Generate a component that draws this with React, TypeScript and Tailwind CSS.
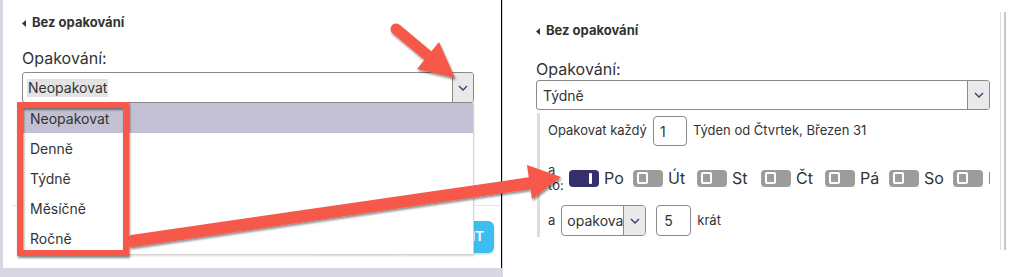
const font = { fontFamily: "Inter, 'Noto Sans', sans-serif" };

function Chevron() {
  return (
    <svg width="10" height="6" viewBox="0 0 10 6" fill="none">
      <path d="M1 1l4 4 4-4" stroke="#3a3470" strokeWidth="1.3" />
    </svg>
  );
}

function Caret() {
  return (
    <svg width="4" height="7" viewBox="0 0 4 7" className="mr-[6px]">
      <path d="M4 0v7L0 3.5z" fill="#333" />
    </svg>
  );
}

function Toggle({ on }: { on?: boolean }) {
  if (on) {
    return (
      <div className="w-[30px] h-[17px] rounded-[4px] bg-[#352f6b] flex items-center justify-end pr-[7px] shrink-0">
        <div className="w-[3px] h-[11px] bg-white rounded-[1px]" />
      </div>
    );
  }
  return (
    <div className="w-[30px] h-[17px] rounded-[4px] bg-[#9c9c9c] flex items-center pl-[4px] shrink-0">
      <div className="w-[11px] h-[12px] rounded-[2px] border-2 border-white" />
    </div>
  );
}

const days = ["Po", "Út", "St", "Čt", "Pá", "So", "Ne"];
const options = ["Neopakovat", "Denně", "Týdně", "Měsíčně", "Ročně"];

function LeftPanel() {
  return (
    <div className="w-[503px] h-[277px] bg-[#d9d6e3] pl-[3px] pb-[9px] shrink-0">
      <div className="relative w-[499px] h-[268px] bg-white border-r border-black text-[#333]">
        <div className="px-[19px] pt-[14px]">
          <div className="flex items-center h-[18px] text-[13px] font-bold">
            <Caret />
            Bez opakování
          </div>
          <div className="mt-[16px] text-[16px] leading-[20px]">Opakování:</div>
          <div className="mt-[4px] w-[452px] h-[31px] border border-[#8a8a8a] rounded-[3px] flex overflow-hidden">
            <div className="flex-1 flex items-center pl-[4px] text-[14px]">
              <span className="bg-[#e3e3e3] px-[1px] leading-[18px]">Neopakovat</span>
            </div>
            <div className="w-[21px] bg-[#e9e9e9] border-l border-[#8a8a8a] flex items-center justify-center">
              <Chevron />
            </div>
          </div>
          <div className="h-[102px]" />
        </div>
        <div className="ml-[9px] border-t border-[#e6e6e6] pt-[15px] pr-[7px] flex justify-end gap-[5px]">
          <button className="w-[90px] h-[32px] rounded-[6px] bg-white shadow-[0_1px_3px_rgba(0,0,0,0.2)] text-[13px]">
            ZRUŠIT
          </button>
          <button className="w-[90px] h-[32px] rounded-[6px] bg-[#3bbef0] shadow-[0_1px_3px_rgba(0,0,0,0.2)] text-white font-bold text-[13px] text-right pr-[10px]">
            ULOŽIT
          </button>
        </div>
        <div className="absolute left-[19px] top-[103px] w-[452px] h-[152px] bg-white border border-[#d4d4d4] border-t-0 shadow-[0_1px_2px_rgba(0,0,0,0.15)]">
          {options.map((o, i) => (
            <div
              key={o}
              className={`h-[30px] flex items-center pl-[7px] text-[14px] ${i === 0 ? "bg-[#c3c0d3]" : ""}`}
            >
              {o}
            </div>
          ))}
        </div>
      </div>
    </div>
  );
}

function RightPanel() {
  return (
    <div className="flex-1 h-[277px] bg-white flex text-[#333]">
      <div className="w-[496px] pl-[33px] pr-[9px] pt-[22px]">
        <div className="flex items-center h-[18px] text-[13px] font-bold">
          <Caret />
          Bez opakování
        </div>
        <div className="mt-[19px] text-[16px] leading-[20px]">Opakování:</div>
        <div className="mt-[1px] w-[454px] h-[30px] border border-[#8a8a8a] rounded-[3px] flex overflow-hidden">
          <div className="flex-1 flex items-center pl-[6px] text-[14px]">Týdně</div>
          <div className="w-[22px] bg-[#e9e9e9] border-l border-[#8a8a8a] flex items-center justify-center">
            <Chevron />
          </div>
        </div>
        <div className="mt-[3px] ml-[1px] w-[453px] border-l-[3px] border-[#dddddd] pl-[8px] pt-[3px] pb-[1px] overflow-hidden">
          <div className="flex items-center h-[30px] text-[13px]">
            <span>Opakovat každý</span>
            <div className="ml-[6px] w-[34px] h-[30px] border border-[#8a8a8a] rounded-[4px] flex items-center pl-[6px] text-[14px]">
              1
            </div>
            <span className="ml-[6px]">Týden od Čtvrtek, Březen 31</span>
          </div>
          <div className="mt-[17px] flex items-center h-[30px]">
            <div className="w-[21px] shrink-0 text-[13px] leading-[15px]">
              a<br />to:
            </div>
            {days.map((d, i) => (
              <div key={d} className="w-[64px] shrink-0 flex items-center gap-[5px] text-[16px]">
                <Toggle on={i === 0} />
                <span>{d}</span>
              </div>
            ))}
          </div>
          <div className="mt-[12px] flex items-center h-[31px] text-[14px]">
            <span className="text-[13px]">a</span>
            <div className="ml-[6px] w-[85px] h-[31px] border border-[#8a8a8a] rounded-[4px] flex overflow-hidden">
              <div className="flex-1 overflow-hidden flex items-center pl-[5px] whitespace-nowrap">opakovat</div>
              <div className="w-[22px] shrink-0 bg-[#e9e9e9] border-l border-[#8a8a8a] flex items-center justify-center">
                <Chevron />
              </div>
            </div>
            <div className="ml-[10px] w-[35px] h-[31px] border border-[#8a8a8a] rounded-[4px] flex items-center pl-[7px]">
              5
            </div>
            <span className="ml-[6px] text-[13px]">krát</span>
          </div>
        </div>
      </div>
      <div className="mt-[12px] ml-[1px] w-[6px] h-[238px] border-l border-[#dedede] border-r-2 border-r-[#c6c6c6]" />
    </div>
  );
}

function Arrows() {
  const red = "#f65849";
  return (
    <svg className="absolute inset-0 pointer-events-none" width="1012" height="277" viewBox="0 0 1012 277">
      <defs>
        <filter id="sh" x="-10%" y="-10%" width="130%" height="130%">
          <feDropShadow dx="1" dy="2" stdDeviation="1.2" floodColor="#000" floodOpacity="0.45" />
        </filter>
      </defs>
      <g filter="url(#sh)">
        <rect x="20" y="105" width="106" height="148" fill="none" stroke={red} strokeWidth="6" />
        <line x1="396" y1="29" x2="432" y2="59" stroke={red} strokeWidth="11" strokeLinecap="round" />
        <polygon points="455,78 417,69 439,42" fill={red} />
        <line x1="132" y1="241" x2="531" y2="183" stroke={red} strokeWidth="12" strokeLinecap="round" />
        <polygon points="561,177 527,165 532,199" fill={red} />
      </g>
    </svg>
  );
}

export default function App() {
  return (
    <div className="relative w-[1012px] h-[277px] flex overflow-hidden" style={font}>
      <LeftPanel />
      <RightPanel />
      <Arrows />
    </div>
  );
}
